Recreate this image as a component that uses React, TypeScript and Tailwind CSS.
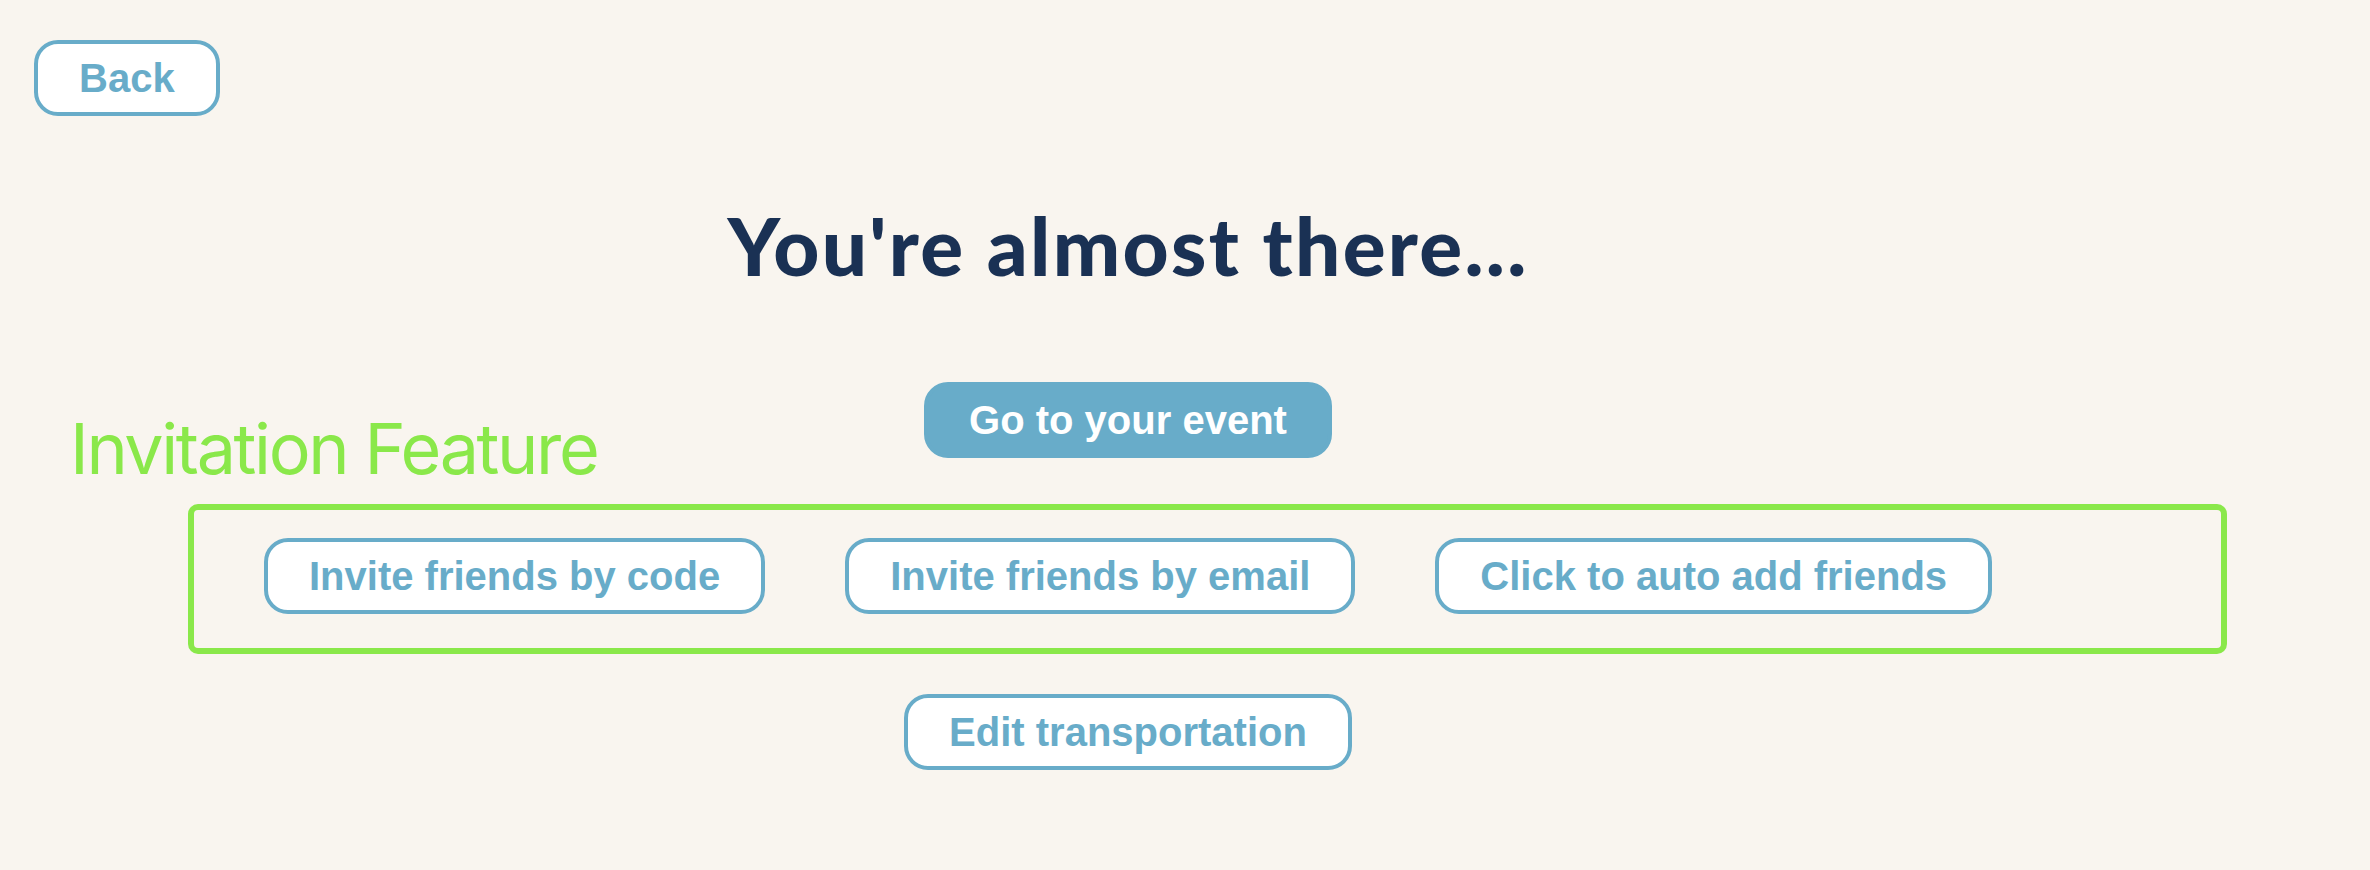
const btn =
  "flex h-[76px] items-center justify-center rounded-[24px] border-[4px] border-[#68acc9] px-[41px] text-[40px] font-bold leading-none";

function OutlineButton({ label }: { label: string }) {
  return <button className={`${btn} bg-white text-[#68acc9]`}>{label}</button>;
}

export default function App() {
  return (
    <div
      className="min-h-screen w-full bg-[#f9f5ef] pb-[100px]"
      style={{ fontFamily: '"Liberation Sans", Arial, sans-serif' }}
    >
      <div className="pl-[34px] pt-[40px]">
        <button className={`${btn} bg-white px-[39px] text-[#68acc9]`}>Back</button>
      </div>

      <div className="flex w-[2256px] flex-col items-center">
        <h1 className="mt-[89px] font-['Lato',sans-serif] text-[80px] font-black leading-[80px] tracking-[2.3px] text-[#1a3154]">
          You're almost there...
        </h1>
        <button className={`${btn} mt-[97px] bg-[#68acc9] px-[40px] text-white`}>Go to your event</button>
      </div>

      <p className="-mt-[44px] ml-[70px] font-['Inter',sans-serif] text-[70px] font-normal leading-[70px] tracking-[-2.4px] text-[#8ae84a]">
        Invitation Feature
      </p>

      <div className="ml-[188px] mt-[20px] h-[150px] w-[2039px] rounded-[10px] border-[6px] border-[#8ae84a] pl-[70px] pt-[28px]">
        <div className="flex items-start gap-[80px]">
          <OutlineButton label="Invite friends by code" />
          <OutlineButton label="Invite friends by email" />
          <OutlineButton label="Click to auto add friends" />
        </div>
      </div>

      <div className="mt-[40px] flex w-[2256px] justify-center">
        <OutlineButton label="Edit transportation" />
      </div>
    </div>
  );
}
